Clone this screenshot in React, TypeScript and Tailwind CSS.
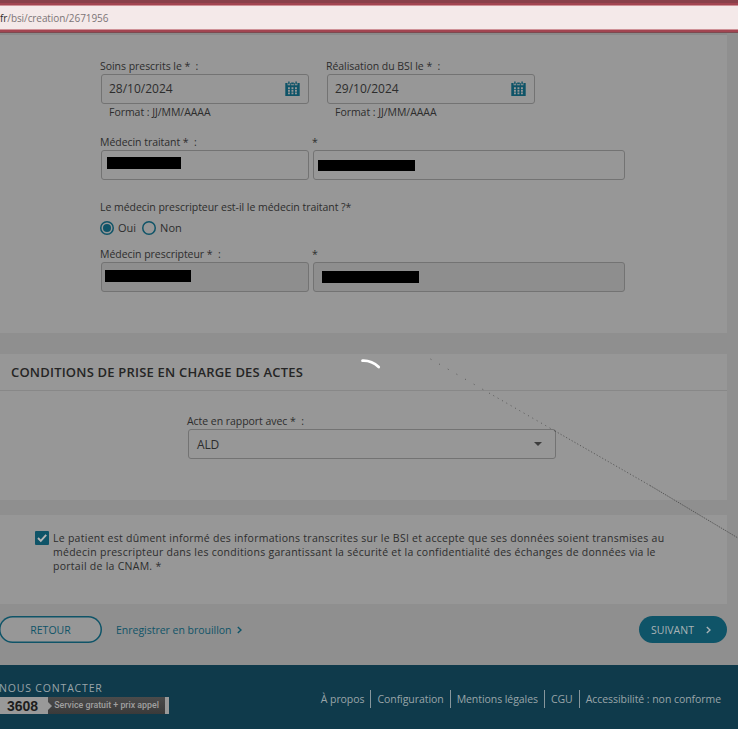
import type { ReactNode } from "react"
import clsx from "clsx"

function CalendarIcon() {
  return (
    <svg className="h-[15px] w-[15px] shrink-0" viewBox="0 0 15 15">
      <path fill="#0f5468" d="M.3 2H2.6v2.2h2.6V2h.9v2.2h2.8V2h.9v2.2h2.6V2h2.3v13H.3z" />
      <path fill="#0f5468" d="M3.2.5h1.4v2.8H3.2zM6.2 1.6h2.6v1.6H6.2zM10.4.5h1.4v2.8h-1.4z" />
      <g fill="#979797">
        <path d="M3 6.3h1.9v1.9H3zM6.5 6.3h1.9v1.9H6.5zM10 6.3h1.9v1.9H10z" />
        <path d="M3 9h1.9v1.7H3zM6.5 9h1.9v1.7H6.5zM10 9h1.9v1.7H10z" />
        <path d="M3 11.6h1.9v1.6H3zM6.5 11.6h1.9v1.6H6.5zM10 11.6h1.9v1.6H10z" />
      </g>
    </svg>
  )
}

function Chevron({ className }: { className?: string }) {
  return (
    <svg className={clsx("h-2 w-[5px]", className)} viewBox="0 0 5 8" fill="none" stroke="currentColor" strokeWidth="1.4">
      <path d="M.8 1 4 4 .8 7" />
    </svg>
  )
}

interface FieldProps {
  label: string
  width: string
  disabled?: boolean
  children?: ReactNode
}

function Field({ label, width, disabled, children }: FieldProps) {
  return (
    <div className={width}>
      <div className="-ml-px h-4 text-[10.5px] leading-[17px] tracking-[-0.04px] whitespace-pre">{label}</div>
      <div
        className={clsx(
          "flex h-[30px] items-center rounded-[3px] border border-[#737373]",
          disabled && "bg-[#8e8e8e]"
        )}
      >
        {children}
      </div>
    </div>
  )
}

function DateField({ label, value }: { label: string; value: string }) {
  return (
    <div>
      <Field label={label} width="w-[208px]">
        <span className="grow pl-[7px] text-[12px]">{value}</span>
        <span className="pr-2 pb-px">
          <CalendarIcon />
        </span>
      </Field>
      <div className="h-4 pl-2 text-[10.5px] leading-4 tracking-[-0.04px]">Format : JJ/MM/AAAA</div>
    </div>
  )
}

function Radio({ label, checked }: { label: string; checked?: boolean }) {
  return (
    <label className="flex items-center gap-1 text-[11px]">
      <span className="flex h-[14px] w-[14px] items-center justify-center rounded-full shadow-[inset_0_0_0_1.5px_#0f5468]">
        {checked && <span className="h-2 w-2 rounded-full bg-[#0f5468]" />}
      </span>
      {label}
    </label>
  )
}

const footerLinks = ["À propos", "Configuration", "Mentions légales", "CGU", "Accessibilité : non conforme"]

export default function App() {
  return (
    <div className="relative h-[729px] w-[738px] overflow-hidden bg-[#8f8f8f] font-['Open_Sans','Liberation_Sans',sans-serif] text-[#2d2d2d]">
      {/* Address bar */}
      <div className="h-[33px] border-t-[3px] border-b border-t-[#89404a] border-b-[#7d4a50] bg-[#a24551] pt-[2px]">
        <div className="flex h-[25px] items-center border-y border-[#cf9298] bg-[#f4e9e9] pt-0.5 text-[10px] tracking-[-0.08px] text-[#7c7577]">
          <span className="font-medium text-[#2f2a2b]">fr</span>/bsi/creation/2671956
        </div>
      </div>

      <section className="h-[300px] w-[727px] border-t-2 border-[#8b8b8b] bg-[#979797] pt-[23px] pl-[101px]">
        <div className="flex gap-[18px]">
          <DateField label="Soins prescrits le *  :" value="28/10/2024" />
          <DateField label="Réalisation du BSI le *  :" value="29/10/2024" />
        </div>
        <div className="mt-[14px] flex gap-1">
          <Field label="Médecin traitant *  :" width="w-[208px]">
            <span className="mb-1 ml-[5px] h-3 w-[74px] bg-black" />
          </Field>
          <Field label="*" width="w-[312px]">
            <span className="mt-px ml-1 h-[11px] w-[97px] bg-black" />
          </Field>
        </div>
        <p className="mt-[19px] -ml-px text-[10.5px] leading-4 tracking-[-0.04px]">
          Le médecin prescripteur est-il le médecin traitant ?*
        </p>
        <div className="mt-[5px] -ml-px flex h-4 gap-1.5">
          <Radio label="Oui" checked />
          <Radio label="Non" />
        </div>
        <div className="mt-[10px] flex gap-1">
          <Field label="Médecin prescripteur *  :" width="w-[208px]" disabled>
            <span className="mb-0.5 ml-[3px] h-3 w-[86px] bg-black" />
          </Field>
          <Field label="*" width="w-[312px]" disabled>
            <span className="ml-2 h-3 w-[97px] bg-black" />
          </Field>
        </div>
      </section>

      <section className="mt-[21px] h-[146px] w-[727px] bg-[#979797]">
        <h2 className="flex h-[37px] items-center border-b border-[#888] pt-[2px] pl-[11px] text-[13px] font-semibold tracking-[0.2px] text-[#252525]">
          CONDITIONS DE PRISE EN CHARGE DES ACTES
        </h2>
        <div className="pt-[22px] pl-[188px]">
          <Field label="Acte en rapport avec *  :" width="w-[368px]">
            <span className="grow pt-px pl-2 text-[12px] tracking-[-0.2px]">ALD</span>
            <span className="mr-[13px] border-x-4 border-t-4 border-x-transparent border-t-[#3d3d3d]" />
          </Field>
        </div>
      </section>

      <section className="mt-[15px] flex h-[89px] w-[727px] gap-1 bg-[#979797] pt-[15px] pl-[35px]">
        <span className="mt-px flex h-[14px] w-[14px] shrink-0 items-center justify-center rounded-[1px] bg-[#0f5468]">
          <svg className="h-[10px] w-[10px]" viewBox="0 0 10 10" fill="none" stroke="#b5b5b5" strokeWidth="1.9">
            <path d="m1 5 2.8 2.8L9.2 1.8" />
          </svg>
        </span>
        <p className="pt-px text-[10.5px] leading-[14.2px] tracking-[0.27px] whitespace-nowrap">
          Le patient est dûment informé des informations transcrites sur le BSI et accepte que ses données soient transmises au
          <br />
          médecin prescripteur dans les conditions garantissant la sécurité et la confidentialité des échanges de données via le
          <br />
          portail de la CNAM. *
        </p>
      </section>

      <div className="flex h-[61px] w-[727px] items-start pt-3 text-[10.5px] text-[#0f5468]">
        <button className="-ml-px h-[27px] w-[103px] rounded-full bg-[#979797] pt-0.5 shadow-[inset_0_0_0_1.5px_#0f5468]">
          RETOUR
        </button>
        <a className="ml-[14px] flex h-[27px] items-center gap-[5px] pt-0.5 tracking-[-0.02px]">
          Enregistrer en brouillon <Chevron className="mb-0.5" />
        </a>
        <button className="ml-auto flex h-[27px] w-[88px] items-center rounded-full bg-[#0f5468] pt-0.5 pl-3 text-[#a9b3b6]">
          SUIVANT <Chevron className="mb-0.5 ml-3" />
        </button>
      </div>

      <footer className="flex h-16 items-start justify-between bg-[#0f3a4b] text-[#9aa5a9]">
        <div className="pt-[15px]">
          <div className="-ml-px text-[10.5px] leading-4 tracking-[0.83px]">NOUS CONTACTER</div>
          <div className="mt-px flex h-[17px] w-[169px] items-center bg-[#999] font-['Liberation_Sans',sans-serif]">
            <span className="w-12 pl-[7px] text-[14px] leading-4 font-bold text-[#1d1d1d]">3608</span>
            <span className="relative flex h-full w-[117px] items-center justify-center bg-linear-to-b from-[#4b4b4b] to-[#3a3a3a] font-['Roboto',sans-serif] text-[8.8px] font-medium whitespace-nowrap text-[#a0a0a0]">
              <span className="absolute top-[5px] left-0 border-y-4 border-l-4 border-y-transparent border-l-[#999]" />
              Service gratuit + prix appel
            </span>
          </div>
        </div>
        <nav className="flex pt-[25px] pr-[17px] text-[10.5px] leading-[18px] tracking-[-0.06px]">
          {footerLinks.map((link, i) => (
            <a key={link} className={clsx(i > 0 && "ml-1.5 border-l border-[#87969c] pl-1.5")}>
              {link}
            </a>
          ))}
        </nav>
      </footer>

      {/* Loading spinner and stray pointer line drawn over the page */}
      <svg className="pointer-events-none absolute inset-0 h-full w-full" viewBox="0 0 738 729" fill="none">
        <path d="M362.5 360.7Q371.5 360.3 378.7 367" stroke="#fff" strokeWidth="2.8" strokeLinecap="round" />
        <g stroke="#3f3f3f" strokeWidth="0.7">
          <path d="M430.5 359 489 393" strokeDasharray="1 9" />
          <path d="M489 393 555 431" strokeDasharray="1 4" />
          <path d="M555 431 650 485.5" strokeDasharray="1.2 2" />
          <path d="M650 485.5 738 538" strokeDasharray="1.5 1" />
        </g>
      </svg>
    </div>
  )
}
